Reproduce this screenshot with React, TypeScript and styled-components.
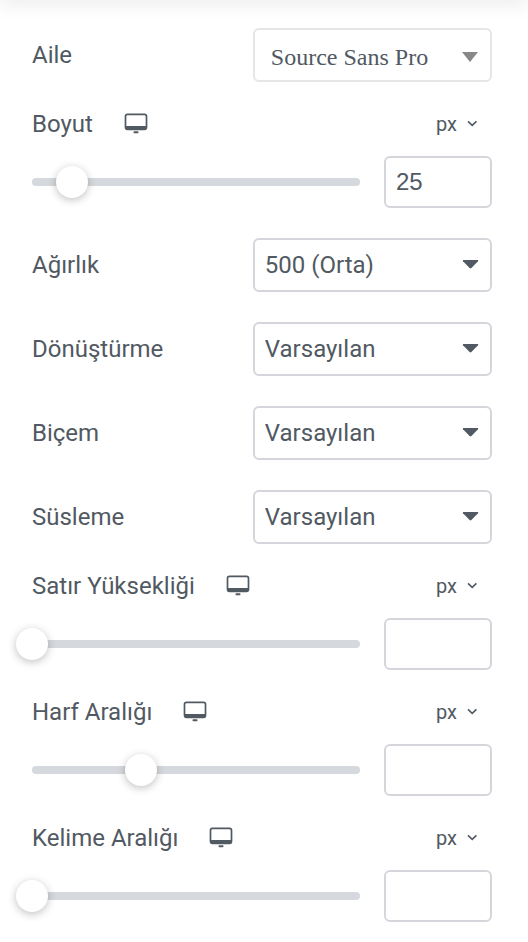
import React, { useId, useState } from "react";
import styled, { createGlobalStyle } from "styled-components";

const ink = "#515962";
const line = "#d5d6db";

const GlobalStyle = createGlobalStyle`
  *, *::before, *::after { box-sizing: border-box; }
  body {
    margin: 0;
    background: #ffffff;
    color: ${ink};
    font-family: Roboto, "Liberation Sans", sans-serif;
    font-size: 24px;
    line-height: 28px;
  }
`;

const Panel = styled.main`
  overflow: hidden;
`;

const TopEdge = styled.div`
  height: 8px;
  margin-top: -8px;
  box-shadow: 0 0 20px 0 rgba(0, 0, 0, 0.17);
`;

const Controls = styled.form`
  display: flex;
  flex-direction: column;
  gap: 30px;
  padding: 28px 36px 20px 32px;
`;

const Row = styled.div`
  display: flex;
  align-items: center;
  justify-content: space-between;
`;

const SelectBox = styled.div`
  position: relative;
  flex: 0 0 52%;
`;

const Select = styled.select<{ $family?: boolean }>`
  display: block;
  width: 100%;
  height: 54px;
  padding: ${(p) => (p.$family ? "4px 40px 0 16px" : "0 40px 0 10px")};
  border: 2px solid ${(p) => (p.$family ? "#e6e6e8" : line)};
  border-radius: 6px;
  background: #ffffff;
  color: ${ink};
  font-family: ${(p) => (p.$family ? '"Liberation Serif", serif' : 'Roboto, sans-serif')};
  font-size: 24px;
  appearance: none;
`;

const Arrow = styled.svg`
  position: absolute;
  top: 20px;
  right: 13px;
  width: 17px;
  height: 14px;
  pointer-events: none;
`;

const Group = styled.div`
  display: flex;
  flex-direction: column;
  gap: 20px;
`;

const Heading = styled.div`
  display: flex;
  align-items: center;
  height: 24px;
`;

const DeviceButton = styled.button`
  display: flex;
  margin-left: 31px;
  padding: 0;
  border: 0;
  background: none;
  color: ${ink};
`;

const UnitButton = styled.button`
  display: flex;
  align-items: center;
  gap: 10px;
  margin: 0 14px 0 auto;
  padding: 0;
  border: 0;
  background: none;
  color: ${ink};
  font-family: Roboto, sans-serif;
  font-size: 20px;
  line-height: 24px;
`;

const SliderRow = styled.div`
  display: flex;
  align-items: center;
  gap: 24px;
`;

const Track = styled.div`
  display: flex;
  flex: 1;
  align-items: center;
  height: 8px;
  border-radius: 4px;
  background: #d5d8dc;
`;

const Range = styled.input`
  flex: 1;
  height: 32px;
  min-width: 0;
  margin: 0 -16px;
  background: none;
  appearance: none;

  &::-webkit-slider-thumb {
    width: 32px;
    height: 32px;
    border-radius: 50%;
    background: #ffffff;
    box-shadow: 0 2px 8px rgba(0, 0, 0, 0.25);
    appearance: none;
  }
`;

const NumberBox = styled.input`
  width: 108px;
  height: 52px;
  padding: 0 10px;
  border: 2px solid ${line};
  border-radius: 6px;
  background: #ffffff;
  color: ${ink};
  font-family: "Liberation Sans", Arial, sans-serif;
  font-size: 24px;
`;

const Monitor = () => (
  <svg width="24" height="22" viewBox="0 0 24 22" aria-hidden="true">
    <rect x="1.5" y="1.3" width="21" height="15" rx="2" fill="none" stroke="currentColor" strokeWidth="1.7" />
    <path d="M1.5 13h21v1.8a2.2 2.2 0 0 1-2.2 2.2H3.7a2.2 2.2 0 0 1-2.2-2.2z" fill="currentColor" />
    <rect x="9.5" y="18.2" width="5" height="2" rx=".8" fill="currentColor" />
  </svg>
);

const Chevron = () => (
  <svg width="11" height="8" viewBox="0 0 11 8" aria-hidden="true">
    <path d="M1 1.4 5.2 5.4 9.4 1.4" fill="none" stroke="currentColor" strokeWidth="1.6" />
  </svg>
);

type SelectRowProps = { label: string; value: string; family?: boolean };

function SelectRow({ label, value, family }: SelectRowProps) {
  const id = useId();
  return (
    <Row>
      <label htmlFor={id}>{label}</label>
      <SelectBox>
        <Select id={id} $family={family}>
          <option>{value}</option>
        </Select>
        <Arrow viewBox="0 0 17 14" aria-hidden="true">
          {family ? (
            <path d="M0 4h16L8 14z" fill="#888888" />
          ) : (
            <path d="M1.4 2h14.2q1.1.2.4 1.2L9.4 10q-.9.8-1.8 0L1 3.2Q.3 2.2 1.4 2z" fill={ink} />
          )}
        </Arrow>
      </SelectBox>
    </Row>
  );
}

type SliderProps = { label: string; min: number; max: number; initial?: string; step?: number };

function SliderControl({ label, min, max, initial = "", step = 1 }: SliderProps) {
  const id = useId();
  const [value, setValue] = useState(initial);
  return (
    <Group>
      <Heading>
        <label htmlFor={id}>{label}</label>
        <DeviceButton type="button" aria-label="Masaüstü">
          <Monitor />
        </DeviceButton>
        <UnitButton type="button">
          px
          <Chevron />
        </UnitButton>
      </Heading>
      <SliderRow>
        <Track>
          <Range
            type="range"
            aria-label={label}
            min={min}
            max={max}
            step={step}
            value={value === "" ? Math.max(min, 0) : value}
            onChange={(e) => setValue(e.target.value)}
          />
        </Track>
        <NumberBox id={id} inputMode="decimal" value={value} onChange={(e) => setValue(e.target.value)} />
      </SliderRow>
    </Group>
  );
}

export default function App() {
  return (
    <>
      <GlobalStyle />
      <Panel>
        <TopEdge />
        <Controls>
          <SelectRow label="Aile" value="Source Sans Pro" family />
          <SliderControl label="Boyut" min={1} max={200} initial="25" />
          <SelectRow label="Ağırlık" value="500 (Orta)" />
          <SelectRow label="Dönüştürme" value="Varsayılan" />
          <SelectRow label="Biçem" value="Varsayılan" />
          <SelectRow label="Süsleme" value="Varsayılan" />
          <SliderControl label="Satır Yüksekliği" min={0} max={100} />
          <SliderControl label="Harf Aralığı" min={-5} max={10} />
          <SliderControl label="Kelime Aralığı" min={0} max={50} />
        </Controls>
      </Panel>
    </>
  );
}
